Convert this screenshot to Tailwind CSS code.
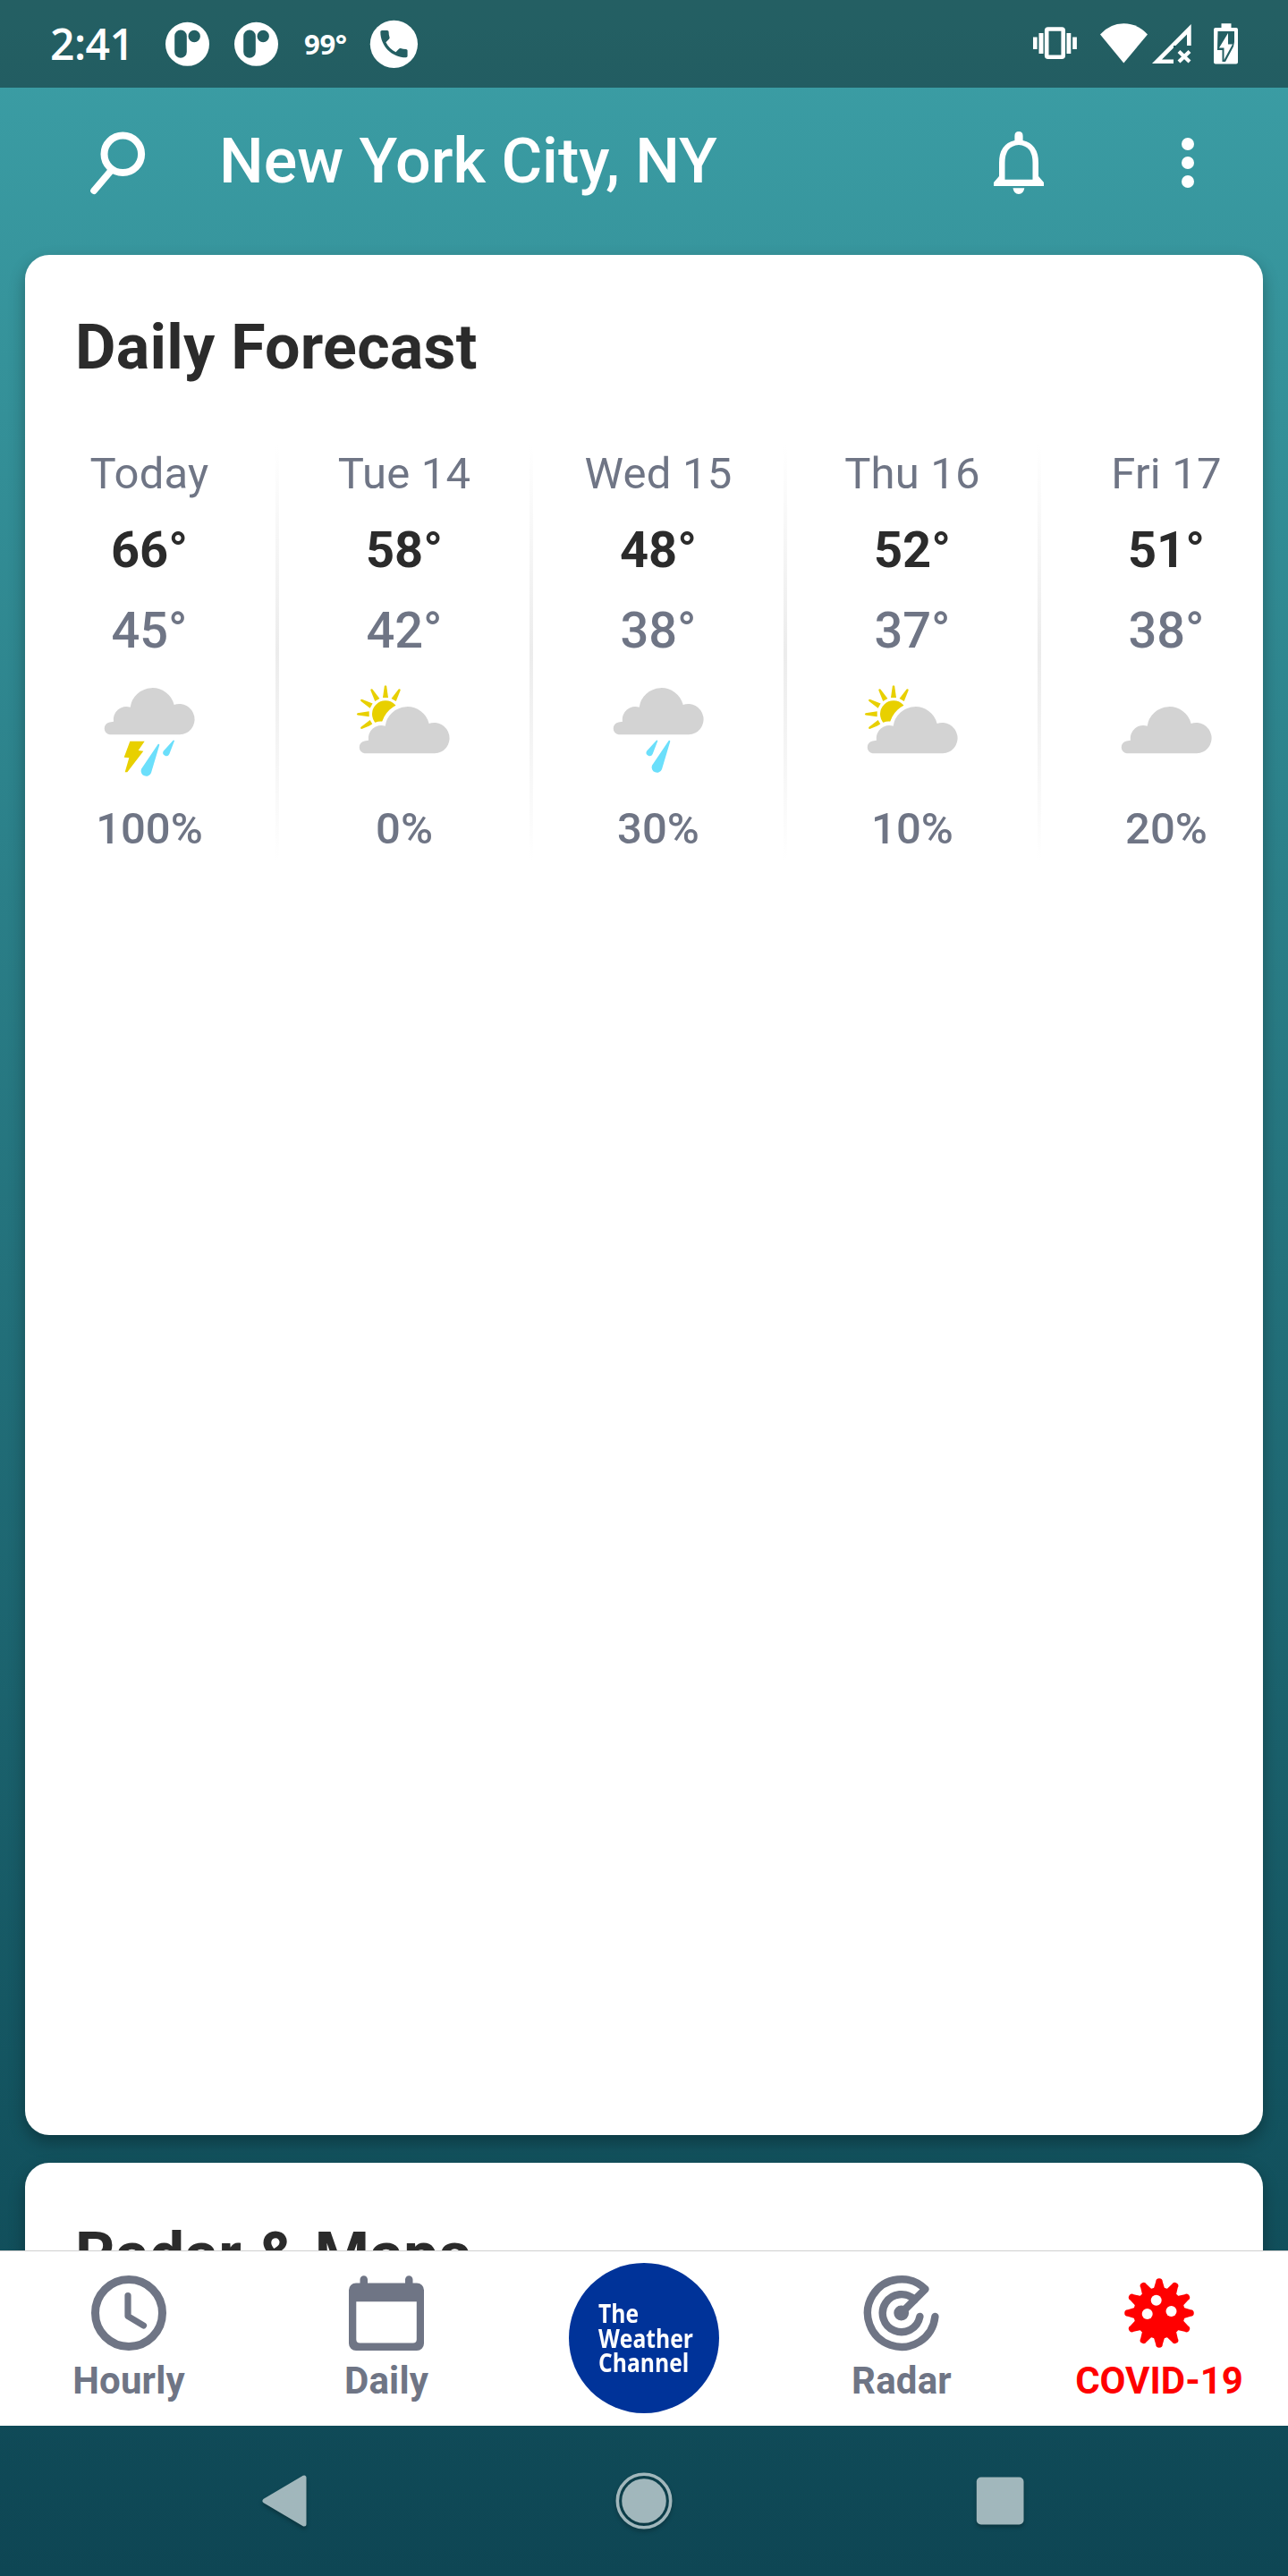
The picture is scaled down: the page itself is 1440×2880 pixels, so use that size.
<!DOCTYPE html>
<html lang="en">
<head>
<meta charset="utf-8">
<title>Daily Forecast</title>
<script src="https://cdn.jsdelivr.net/npm/@tailwindcss/browser@4"></script>
</head>
<body class="font-['Roboto',sans-serif]">
<svg width="0" height="0" class="absolute">
  <defs>
    <path id="cloud" d="M101 214A21 21 0 0 1 101 172.500L114 170A43 43 0 0 1 170 122A75 75 0 0 1 317 114A51.500 51.500 0 1 1 336 214Z"/>
    <path id="big-drop" d="M263 246Q266 243 268 248L240 342A17.500 17.500 0 1 1 207 329Z"/>
    <path id="small-drop" d="M313 234Q316 231 318 235L301 279A11 11 0 1 1 281 269Z"/>
    <path id="ray" d="M-9 -55L-3.500 -94Q0 -99 3.500 -94L9 -55Z"/>
    <g id="partly">
      <g fill="#e8d000" transform="translate(171 145)">
        <circle r="45"/>
        <use href="#ray"/>
        <use href="#ray" transform="rotate(30)"/>
        <use href="#ray" transform="rotate(-30)"/>
        <use href="#ray" transform="rotate(-60)"/>
        <use href="#ray" transform="rotate(-90)"/>
        <use href="#ray" transform="rotate(-120)"/>
      </g>
      <use href="#cloud" y="63" fill="#fff" stroke="#fff" stroke-width="26"/>
      <use href="#cloud" y="63" fill="#d3d3d3"/>
    </g>
  </defs>
</svg>
<div class="flex h-[2880px] w-[1440px] flex-col overflow-hidden bg-linear-[180deg,#3c9fa6_0%,#13535f_82%,#0e4654_100%]">
  <header class="flex h-[98px] shrink-0 items-center bg-black/40 font-['Open_Sans',sans-serif] text-white">
    <div class="ml-[56px] w-[128px] text-[48px] leading-[98px] font-semibold tracking-[-0.5px]">2:41</div>
    <svg width="50" height="98" viewBox="184 0 50 98"><path fill="#fff" fill-rule="evenodd" d="M185 49.300a24.500 24.500 0 1 0 49 0a24.500 24.500 0 1 0 -49 0ZM202 33.500a6.800 6.800 0 0 0 -6.800 6.800V58a6.800 6.800 0 0 0 13.600 0V40.300a6.800 6.800 0 0 0 -6.800 -6.800ZM210.500 40.500a6.700 6.700 0 1 0 13.400 0a6.700 6.700 0 1 0 -13.400 0Z"/></svg>
    <svg class="ml-[27px]" width="50" height="98" viewBox="184 0 50 98"><path fill="#fff" fill-rule="evenodd" d="M185 49.300a24.500 24.500 0 1 0 49 0a24.500 24.500 0 1 0 -49 0ZM202 33.500a6.800 6.800 0 0 0 -6.800 6.800V58a6.800 6.800 0 0 0 13.600 0V40.300a6.800 6.800 0 0 0 -6.800 -6.800ZM210.500 40.500a6.700 6.700 0 1 0 13.400 0a6.700 6.700 0 1 0 -13.400 0Z"/></svg>
    <div class="ml-[29px] w-[72px] text-[31px] leading-[98px] font-bold tracking-[-0.3px]">99°</div>
    <svg width="56" height="98" viewBox="412 0 56 98"><circle cx="440.400" cy="49.300" r="26.600" fill="#fff"/><path transform="translate(420.300 29) scale(1.680)" fill="#245f63" d="M6.620 10.790c1.440 2.830 3.760 5.140 6.590 6.590l2.200-2.200c.27-.27.670-.36 1.020-.24 1.120.37 2.330.57 3.570.57.550 0 1 .450 1 1V20c0 .550-.450 1-1 1-9.390 0-17-7.610-17-17 0-.550.450-1 1-1h3.500c.550 0 1 .450 1 1 0 1.250.2 2.450.570 3.570.11.350.030.740-.25 1.020l-2.200 2.200z"/></svg>
    <svg class="ml-auto mr-[40px]" width="260" height="98" viewBox="1140 0 260 98" fill="#fff">
      <rect x="1170.200" y="32.500" width="18.500" height="31.200" rx="1.500" fill="none" stroke="#fff" stroke-width="4.600"/>
      <path d="M1161.500 37h5v23h-5zM1155 41.500h4.600v13.500h-4.600zM1192.500 37h4.800v23h-4.800zM1199.200 41.500h4.700v13.500h-4.700z"/>
      <path d="M1230 38.500Q1241 26.300 1256.300 26.300T1283 38.500L1256.300 70.500Z"/>
      <path d="M1331.700 27V51H1327V38.500L1314.500 51H1312V53.500L1299 66.500H1312V71H1288Z"/>
      <path d="M1318 57.500L1330 69M1330 57.500L1318 69" stroke="#fff" stroke-width="4.200"/>
      <path d="M1359 31H1365.500V26.300H1376.500V31H1382Q1384 31 1384 33V69.500Q1384 71.500 1382 71.500H1359Q1357 71.500 1357 69.500V33Q1357 31 1359 31Z"/>
      <path d="M1361.500 35H1380V47L1379 52L1370 69H1366.500V56H1361Z" fill="#245f63"/>
      <path d="M1373 37V49.500H1378L1368.500 67V53.500H1363Z"/>
    </svg>
  </header>

  <div class="flex h-[187px] shrink-0 items-center text-white">
    <svg class="-mt-[13px] ml-[96px]" width="70" height="90" viewBox="96 140 70 90"><circle cx="137.300" cy="172.300" r="20.800" fill="none" stroke="#fff" stroke-width="8"/><path d="M123.500 191.500L105 213.200" stroke="#fff" stroke-width="7.600" stroke-linecap="round"/></svg>
    <h1 class="-mt-[24px] ml-[79px] text-[70px] leading-[90px] font-medium">New York City, NY</h1>
    <svg class="-mt-[13px] ml-auto" width="60" height="90" viewBox="1108 140 60 90"><path d="M1139 147q4.600 0 4.600 5v5q17.400 4 17.400 25v15l6 7v4h-56v-4l6-7v-15q0-21 17.400-25v-5q0-5 4.600-5zM1139 162q-15.500 1-15.500 20v18.800h31V182q0-19-15.500-20z" fill="#fff" fill-rule="evenodd"/><path d="M1132.500 210.300h12.800q-1 6.700-6.400 6.700t-6.400-6.700z" fill="#fff"/></svg>
    <svg class="-mt-[13px] mr-[102px] ml-[150px]" width="20" height="90" viewBox="1318 140 20 90" fill="#fff"><circle cx="1328" cy="161" r="7"/><circle cx="1328" cy="182" r="7"/><circle cx="1328" cy="203" r="7"/></svg>
  </div>

  <main class="-mt-[20px] flex h-[2251px] shrink-0 flex-col gap-[31px] overflow-hidden px-[28px] pt-[20px]">
    <section class="h-[2102px] shrink-0 rounded-[27px] bg-white shadow-[0_8px_18px_rgba(0,0,0,0.3)]">
      <h2 class="pt-[58px] pl-[56px] text-[70px] leading-[90px] font-bold tracking-[0.25px] text-[#2b2b2b]">Daily Forecast</h2>
      <div class="mt-[65px] flex h-[464px] overflow-hidden text-center text-[#6f7585]">
        <div class="-ml-[3px] mr-px flex w-[284px] shrink-0 flex-col items-center">
          <div class="mt-[2px] text-[49px] leading-[60px] tracking-[0.2px]">Today</div>
          <div class="mt-[20px] text-[56px] leading-[70px] font-bold text-[#2b2b2b]">66°</div>
          <div class="mt-[20px] text-[56px] leading-[70px] font-medium">45°</div>
          <svg width="156" height="130" viewBox="0 0 468 390" class="mt-[10px]"><use href="#cloud" fill="#d3d3d3"/><path fill="#e8d000" d="M169 236H218L197 267L214 269L160 340L152 340L166 292L149 290Z"/><g fill="#6bdffb"><use href="#big-drop"/><use href="#small-drop"/></g></svg>
          <div class="mt-[17px] text-[49px] leading-[60px] font-medium">100%</div>
        </div>
        <div class="-mx-[2px] w-[4px] shrink-0 bg-linear-to-b from-white via-[#ececec] to-white"></div>
        <div class="flex w-[284px] shrink-0 flex-col items-center">
          <div class="mt-[2px] text-[49px] leading-[60px] tracking-[0.2px]">Tue 14</div>
          <div class="mt-[20px] text-[56px] leading-[70px] font-bold text-[#2b2b2b]">58°</div>
          <div class="mt-[20px] text-[56px] leading-[70px] font-medium">42°</div>
          <svg width="156" height="130" viewBox="0 0 468 390" class="mt-[10px]"><use href="#partly"/></svg>
          <div class="mt-[17px] text-[49px] leading-[60px] font-medium">0%</div>
        </div>
        <div class="-mx-[2px] w-[4px] shrink-0 bg-linear-to-b from-white via-[#ececec] to-white"></div>
        <div class="flex w-[284px] shrink-0 flex-col items-center">
          <div class="mt-[2px] text-[49px] leading-[60px] tracking-[0.2px]">Wed 15</div>
          <div class="mt-[20px] text-[56px] leading-[70px] font-bold text-[#2b2b2b]">48°</div>
          <div class="mt-[20px] text-[56px] leading-[70px] font-medium">38°</div>
          <svg width="156" height="130" viewBox="0 0 468 390" class="mt-[10px]"><use href="#cloud" fill="#d3d3d3"/><g fill="#6bdffb"><use href="#big-drop" x="6" y="-12"/><use href="#small-drop" x="-86"/></g></svg>
          <div class="mt-[17px] text-[49px] leading-[60px] font-medium">30%</div>
        </div>
        <div class="-mx-[2px] w-[4px] shrink-0 bg-linear-to-b from-white via-[#ececec] to-white"></div>
        <div class="flex w-[284px] shrink-0 flex-col items-center">
          <div class="mt-[2px] text-[49px] leading-[60px] tracking-[0.2px]">Thu 16</div>
          <div class="mt-[20px] text-[56px] leading-[70px] font-bold text-[#2b2b2b]">52°</div>
          <div class="mt-[20px] text-[56px] leading-[70px] font-medium">37°</div>
          <svg width="156" height="130" viewBox="0 0 468 390" class="mt-[10px]"><use href="#partly"/></svg>
          <div class="mt-[17px] text-[49px] leading-[60px] font-medium">10%</div>
        </div>
        <div class="-mx-[2px] w-[4px] shrink-0 bg-linear-to-b from-white via-[#ececec] to-white"></div>
        <div class="flex w-[284px] shrink-0 flex-col items-center">
          <div class="mt-[2px] text-[49px] leading-[60px] tracking-[0.2px]">Fri 17</div>
          <div class="mt-[20px] text-[56px] leading-[70px] font-bold text-[#2b2b2b]">51°</div>
          <div class="mt-[20px] text-[56px] leading-[70px] font-medium">38°</div>
          <svg width="156" height="130" viewBox="0 0 468 390" class="mt-[10px]"><use href="#cloud" y="63" fill="#d3d3d3"/></svg>
          <div class="mt-[17px] text-[49px] leading-[60px] font-medium">20%</div>
        </div>
      </div>
    </section>
    <section class="h-[400px] shrink-0 rounded-[27px] bg-white shadow-[0_8px_18px_rgba(0,0,0,0.3)]">
      <h2 class="pt-[58px] pl-[56px] text-[70px] leading-[90px] font-bold tracking-[0.25px] text-[#2b2b2b]">Radar &amp; Maps</h2>
    </section>
  </main>

  <nav class="grid h-[196px] shrink-0 grid-cols-5 border-t border-[#d0d0d0] bg-white text-center text-[42px] leading-[50px] font-bold text-[#6f7585]">
    <div class="flex flex-col items-center pt-[23px]">
      <svg width="96" height="96" viewBox="96 2540 96 96" fill="none" stroke="#6f7585"><circle cx="144" cy="2586" r="37.500" stroke-width="9"/><path d="M143 2566.500V2589.500L160.500 2600" stroke-width="7.200" stroke-linecap="round" stroke-linejoin="round"/></svg>
      <div class="mt-[1px] tracking-[0.2px]">Hourly</div>
    </div>
    <div class="flex flex-col items-center pt-[23px]">
      <svg width="96" height="96" viewBox="384 2540 96 96" fill="#6f7585"><path fill-rule="evenodd" d="M398 2552.500H402.500V2548.500A4.250 4.250 0 0 1 411 2548.500V2552.500H453V2548.500A4.250 4.250 0 0 1 461.500 2548.500V2552.500H466A8 8 0 0 1 474 2560.500V2620A8 8 0 0 1 466 2628H398A8 8 0 0 1 390 2620V2560.500A8 8 0 0 1 398 2552.500ZM398.300 2573.300V2615.500A4 4 0 0 0 402.300 2619.500H461.800A4 4 0 0 0 465.800 2615.500V2573.300Z"/></svg>
      <div class="mt-[1px] tracking-[0.2px]">Daily</div>
    </div>
    <div class="flex justify-center pt-[13px]">
      <div class="h-[168px] w-[168px] rounded-full bg-[#003399] pt-[43px] pl-[33px] text-left text-white">
        <div class="origin-left scale-x-[0.88] font-['Open_Sans',sans-serif] text-[28px] leading-[27.500px] font-bold">The<br>Weather<br>Channel</div>
      </div>
    </div>
    <div class="flex flex-col items-center pt-[23px]">
      <svg width="96" height="96" viewBox="960 2540 96 96" fill="none" stroke="#6f7585" stroke-width="8.400" stroke-linecap="round" stroke-linejoin="round"><path d="M1045.400 2590A37.800 37.800 0 1 1 1034.500 2559.300L1007.700 2586"/><path d="M1028.400 2590A21 21 0 1 1 1022.500 2571.200"/><circle cx="1007.700" cy="2586" r="4.200"/></svg>
      <div class="mt-[1px] tracking-[0.2px]">Radar</div>
    </div>
    <div class="flex flex-col items-center pt-[23px] text-[#ff0000]">
      <svg width="96" height="96" viewBox="-48 -46 96 96" fill="#ff0000">
        <defs><path id="spike" d="M-6.500 -26L-3.800 -35A3.800 3.800 0 0 1 3.800 -35L6.500 -26Z"/></defs>
        <circle r="28.700"/>
        <use href="#spike"/><use href="#spike" transform="rotate(30)"/><use href="#spike" transform="rotate(60)"/><use href="#spike" transform="rotate(90)"/><use href="#spike" transform="rotate(120)"/><use href="#spike" transform="rotate(150)"/><use href="#spike" transform="rotate(180)"/><use href="#spike" transform="rotate(210)"/><use href="#spike" transform="rotate(240)"/><use href="#spike" transform="rotate(270)"/><use href="#spike" transform="rotate(300)"/><use href="#spike" transform="rotate(330)"/>
        <g fill="#fff"><circle cx="-3.300" cy="-14.300" r="6"/><circle cx="-13.300" cy="1" r="6"/><circle cx="13.500" cy="-2" r="6"/></g>
      </svg>
      <div class="mt-[1px]">COVID-19</div>
    </div>
  </nav>

  <footer class="flex h-[168px] shrink-0 items-center justify-between pr-[280px] pl-[280px]">
    <svg class="drop-shadow-[0_3px_2px_rgba(0,0,0,0.25)]" width="80" height="80" viewBox="280 2756 80 80"><path d="M340 2770V2822L296 2796Z" fill="#a1b7bc" stroke="#a1b7bc" stroke-width="5" stroke-linejoin="round"/></svg>
    <svg class="drop-shadow-[0_3px_2px_rgba(0,0,0,0.25)]" width="80" height="80" viewBox="-40 -40 80 80"><circle r="29.700" fill="none" stroke="#a1b7bc" stroke-width="3.600"/><circle r="24.800" fill="#a1b7bc"/></svg>
    <svg class="drop-shadow-[0_3px_2px_rgba(0,0,0,0.25)]" width="80" height="80" viewBox="1080 2756 80 80"><rect x="1091.800" y="2769.500" width="52.700" height="53" rx="5" fill="#a1b7bc"/></svg>
  </footer>
</div>
</body>
</html>
